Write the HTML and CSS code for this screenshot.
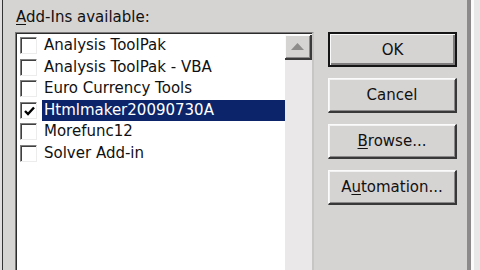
FILE: index.html
```html
<!DOCTYPE html>
<html>
<head>
<meta charset="utf-8">
<link rel="stylesheet" href="styles.css">
</head>
<body>
<div class="screen">
  <div class="edge-left"></div>
  <div class="main">
    <div class="label"><u>A</u>dd-Ins available:</div>
    <div class="listbox">
      <div class="rows">
        <div class="row"><span class="cb"></span><span class="text">Analysis ToolPak</span></div>
        <div class="row"><span class="cb"></span><span class="text">Analysis ToolPak - VBA</span></div>
        <div class="row"><span class="cb"></span><span class="text">Euro Currency Tools</span></div>
        <div class="row sel"><span class="cb"><svg class="check" width="11" height="10" viewBox="0 0 11 10"><polyline points="1,5 4,8 10,1.5" fill="none" stroke="#000" stroke-width="2.4"/></svg></span><span class="text">Htmlmaker20090730A</span></div>
        <div class="row"><span class="cb"></span><span class="text">Morefunc12</span></div>
        <div class="row"><span class="cb"></span><span class="text">Solver Add-in</span></div>
      </div>
      <div class="scrollbar">
        <div class="sb-btn"><svg width="13" height="7" viewBox="0 0 13 7"><polygon points="6.5,0 13,7 0,7" fill="#8e8b8b"/></svg></div>
        <div class="track"></div>
      </div>
    </div>
  </div>
  <div class="buttons">
    <div class="btn default">OK</div>
    <div class="btn">Cancel</div>
    <div class="btn"><span><u>B</u>rowse...</span></div>
    <div class="btn"><span>A<u>u</u>tomation...</span></div>
  </div>
  <div class="edge-right"></div>
</div>
</body>
</html>
```
FILE: styles.css
```css
html, body {
  margin: 0;
  padding: 0;
  background: #d6d3d3;
}
.screen {
  display: flex;
  width: 480px;
  height: 270px;
  overflow: hidden;
  font-family: "DejaVu Sans", sans-serif;
  font-size: 15px;
  color: #111;
}
.edge-left {
  width: 3px;
  flex: none;
  background: #e0dede;
  box-shadow: inset -1px 0 #333;
}
.main {
  width: 311px;
  box-sizing: border-box;
  flex: none;
  padding-left: 12px;
  display: flex;
  flex-direction: column;
}
.label {
  padding-top: 9px;
  padding-left: 1px;
  height: 17px;
  line-height: 17px;
  margin-bottom: 6px;
  white-space: nowrap;
}
u {
  text-decoration: underline;
  text-underline-offset: 2px;
}
.listbox {
  flex: 1;
  display: flex;
  background: #fff;
  border-top: 1px solid #7a7878;
  border-left: 1px solid #7a7878;
  border-right: 2px solid #c8c5c5;
  box-shadow: inset 1px 1px #2c2c2c;
  padding: 2px 0 0 1px;
}
.rows {
  width: 268px;
  flex: none;
}
.row {
  height: 21.5px;
  display: flex;
  align-items: center;
  padding-left: 3px;
}
.cb {
  width: 17px;
  height: 17px;
  box-sizing: border-box;
  flex: none;
  background: #fff;
  border-top: 1px solid #808080;
  border-left: 1px solid #808080;
  border-right: 1px solid #ececec;
  border-bottom: 1px solid #ececec;
  box-shadow: inset 1px 1px #404040;
  margin-right: 5px;
  display: flex;
  align-items: center;
  justify-content: center;
}
.check {
  margin: 1px 0 0 1px;
}
.text {
  flex: 1;
  padding: 0 2px;
  line-height: 21.5px;
  white-space: nowrap;
}
.sel .text {
  background: #0c246a;
  color: #fff;
}
.scrollbar {
  width: 27px;
  flex: none;
  display: flex;
  flex-direction: column;
  background: #eae8e8;
}
.sb-btn {
  height: 25px;
  box-sizing: border-box;
  background: #d6d3d3;
  border-right: 2px solid #3a3a3a;
  border-bottom: 2px solid #3a3a3a;
  box-shadow: inset 1px 1px #fafafa, inset -1px -1px #8a8888;
  display: flex;
  align-items: center;
  justify-content: center;
}
.track {
  flex: 1;
}
.buttons {
  width: 129px;
  flex: none;
  margin-left: 14px;
  padding-top: 32px;
  display: flex;
  flex-direction: column;
  gap: 11px;
}
.btn {
  height: 35px;
  box-sizing: border-box;
  display: flex;
  align-items: center;
  justify-content: center;
  background: #d6d3d3;
  border-top: 1px solid #fbfbfb;
  border-left: 1px solid #fbfbfb;
  border-right: 2px solid #383838;
  border-bottom: 2px solid #383838;
  box-shadow: inset 1px 1px #f2f2f2, inset -1px -1px #8a8888;
  white-space: nowrap;
}
.btn.default {
  border: 2px solid #151515;
  box-shadow: inset 1px 1px #fafafa, inset -2px -2px #7e7c7c;
}
.edge-right {
  width: 13px;
  flex: none;
  margin-left: 10px;
  background: linear-gradient(to right, #8c8a8a 0, #8c8a8a 4px, #fbfbfb 4px, #fbfbfb 7px, #e8e8e8 7px);
}
```
